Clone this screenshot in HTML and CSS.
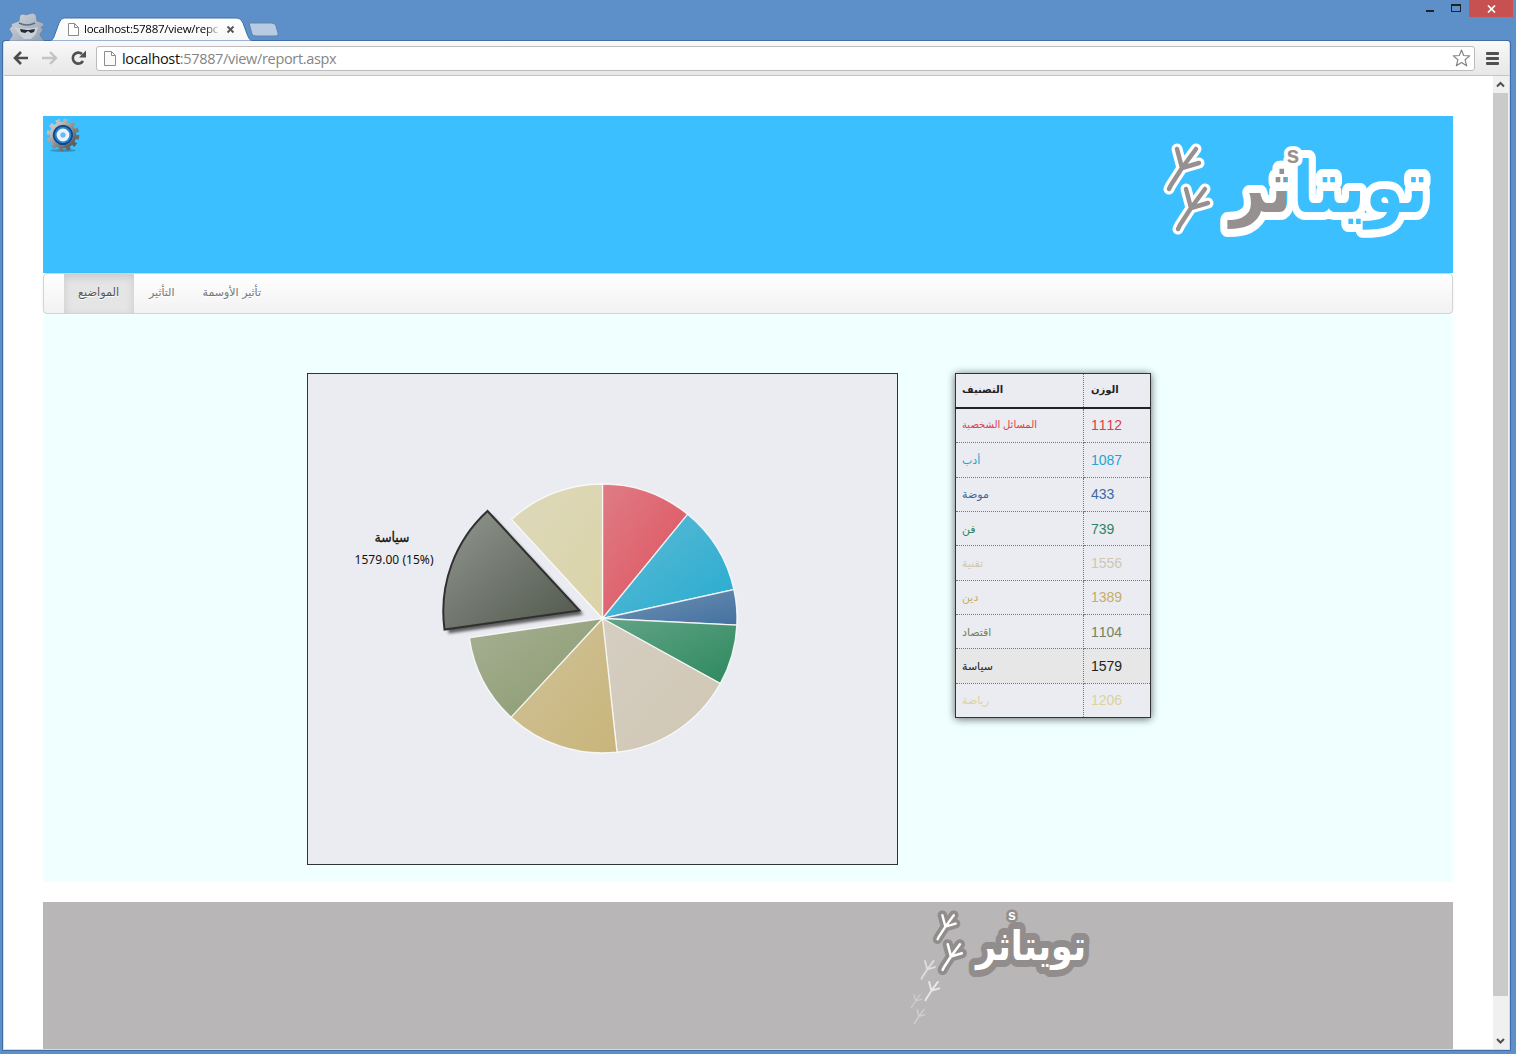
FILE: index.html
```html
<!DOCTYPE html>
<html lang="ar">
<head>
<meta charset="utf-8">
<title>localhost:57887/view/report.aspx</title>
<link rel="stylesheet" href="styles.css">
</head>
<body>
<div class="titlebar">
  <svg class="tabs" width="300" height="41" viewBox="0 0 300 41">
    <defs>
      <linearGradient id="coat" x1="0" y1="0" x2="1" y2="1"><stop offset="0" stop-color="#d3d9e1"/><stop offset="1" stop-color="#929eae"/></linearGradient>
      <linearGradient id="tabfill" x1="0" y1="0" x2="0" y2="1"><stop offset="0" stop-color="#fff"/><stop offset="1" stop-color="#f7f7f7"/></linearGradient>
    </defs>
    <path d="M9 41c1-3 4-5 3-7l-3-5 3-3-1-2 8-3 1-6 3-1 3 1 3-1 4-1 3 2 1 6 6 2 1 3-3 1 2 3-3 4c0 3 3 4 4 7z" fill="url(#coat)" stroke="#6484a9" stroke-width=".7"/>
    <path d="M14 27q12 3 24 0l-2 7-5 5h-7l-6-6z" fill="#c9d0d9"/>
    <path d="M19 23q8 4 16 0" stroke="#5d6c7e" stroke-width="1.400" fill="none"/>
    <path d="M20 29l7 1h2l6-1-1 3-3 1-3-2-3 2-4-1z" fill="#222b36"/>
    <path d="M50 41c3-1 4-4 5-7l4-11q2-5 5-5h173q4 0 6 5l4 11c2 5 3 7 7 7z" fill="url(#tabfill)" stroke="#416fa8"/>
    <path d="M249 23h23q3 0 4 3l2 7q1 3-2 3h-20q-3 0-4-2z" fill="#b7cce3" stroke="#5e83af"/>
    <path d="M68.500 23.500h6l4 4v8h-10zM74.500 23.500v4h4" fill="#fff" stroke="#8b8b8b"/>
    <path d="M227.500 26.500l6 6m0-6l-6 6" stroke="#555" stroke-width="1.800"/>
  </svg>
  <span class="tab-title">localhost:57887/view/repc</span>
  <div class="window-buttons">
    <i class="minimize"></i><i class="maximize"></i>
    <span class="close"><svg width="9" height="8"><path d="M1 .5l7 7m0-7l-7 7" stroke="#fff" stroke-width="1.700"/></svg></span>
  </div>
</div>
<div class="window">
  <div class="toolbar">
    <svg class="tools" width="82" height="34" viewBox="0 0 82 34">
      <path d="M11 17h13M17 11l-6 6 6 6" fill="none" stroke="#4d4d4d" stroke-width="2.600"/>
      <path d="M38 17h13M46 11l6 6-6 6" fill="none" stroke="#c3c3c3" stroke-width="2.400"/>
      <path d="M79 20a5.500 5.500 0 1 1-1-7" fill="none" stroke="#505050" stroke-width="2.600"/>
      <path d="M82 9.500v7h-7z" fill="#505050"/>
    </svg>
    <div class="address">
      <svg width="12" height="16"><path d="M.5 1.500h7l4 4v10h-11zM7.500 1.500v4h4" fill="#fafafa" stroke="#8d8d8d"/></svg>
      <span class="url"><b>localhost</b>:57887/view/report.aspx</span>
      <svg class="star" width="19" height="18" viewBox="0 0 19 18"><path d="M9.500 1l2.200 5.500 6 .4-4.600 3.900 1.600 6-5.200-3.200-5.200 3.200 1.600-6L1.300 6.900l6-.4z" fill="#fff" stroke="#858585" stroke-width="1.200" stroke-linejoin="round"/></svg>
    </div>
    <div class="menu"><i></i><i></i><i></i></div>
  </div>
  <div class="viewport">
    <div class="page">
      <header class="banner">
        <svg class="gear" width="38" height="38" viewBox="-19 -19 38 38">
          <defs><linearGradient id="metal" x1="0" y1="0" x2="1" y2="1"><stop offset="0" stop-color="#d9d9d9"/><stop offset="1" stop-color="#4b4b4b"/></linearGradient></defs>
          <ellipse cy="15.500" rx="13" ry="1.500" fill="#197bad" opacity=".6"/>
          <circle r="14.300" fill="none" stroke="url(#metal)" stroke-width="4" stroke-dasharray="4.200 3.287"/>
          <circle r="11.800" fill="#d9e1e6" stroke="url(#metal)" stroke-width="3"/>
          <circle r="9.300" fill="#2986d6" stroke="#144885" stroke-width="2"/>
          <circle r="4.600" fill="#75b9ec" stroke="#eaf5fc" stroke-width="3.600"/>
        </svg>
        <svg class="logo" width="290" height="120" viewBox="0 0 290 120">
          <defs>
            <g id="foot"><path d="M3 38L14 21 9 2M14 21L28 2M14 21L31 16M3 38L1 42"/></g>
            <linearGradient id="split" gradientUnits="userSpaceOnUse" x1="0" y1="0" x2="290" y2="0"><stop offset=".465" stop-color="#969190"/><stop offset=".465" stop-color="#3cbfff"/></linearGradient>
          </defs>
          <g fill="none" stroke-linecap="round" stroke-linejoin="round">
            <g stroke="#fff" stroke-width="11"><use href="#foot" x="17" y="17"/><use href="#foot" x="26" y="57"/></g>
            <g stroke="#969190" stroke-width="4.500"><use href="#foot" x="17" y="17"/><use href="#foot" x="26" y="57"/></g>
          </g>
          <g transform="translate(0 82) scale(1 1.150)"><text class="word" x="277" y="0" textLength="198" lengthAdjust="spacingAndGlyphs">تويتاثر</text></g>
          <text class="mark" x="142" y="33">s</text>
        </svg>
      </header>
      <nav class="nav"><a class="active">المواضيع</a><a>التأثير</a><a>تأثير الأوسمة</a></nav>
      <main class="content">
        <svg class="chart" width="591" height="492" viewBox="0 0 589 490">
          <defs>
            <linearGradient id="shine" x1="0" y1="0" x2="1" y2="1"><stop offset="0" stop-color="#e0e2e5" stop-opacity=".3"/><stop offset="1" stop-color="#e0e2e5" stop-opacity="0"/></linearGradient>
            <linearGradient id="dark" x1="0" y1="0" x2="1" y2="1"><stop offset="0" stop-color="#92978f"/><stop offset="1" stop-color="#50574c"/></linearGradient>
            <filter id="shade" x="-20%" y="-20%" width="150%" height="150%"><feDropShadow dx="4" dy="4" stdDeviation="1.500" flood-color="#000" flood-opacity=".6"/></filter>
            <path id="s1" d="M0 0V-134.500A134.500 134.500 0 0 1 85.060-104.200z"/>
            <path id="s2" d="M0 0L85.060-104.200A134.500 134.500 0 0 1 131.350-28.950z"/>
            <path id="s3" d="M0 0L131.350-28.950A134.500 134.500 0 0 1 134.330 6.690z"/>
            <path id="s4" d="M0 0L134.330 6.690A134.500 134.500 0 0 1 117.700 65.040z"/>
            <path id="s5" d="M0 0L117.700 65.040A134.500 134.500 0 0 1 14.500 133.700z"/>
            <path id="s6" d="M0 0L14.500 133.700A134.500 134.500 0 0 1-91.400 98.670z"/>
            <path id="s7" d="M0 0L-91.400 98.670A134.500 134.500 0 0 1-133.100 19.300z"/>
            <path id="s8" d="M-23-8L-158 11A136 136 0 0 1-115-107.500z"/>
            <path id="s9" d="M0 0L-90.900-99.100A134.500 134.500 0 0 1 0-134.500z"/>
          </defs>
          <g transform="translate(294.500 244.500)" stroke="#fff" stroke-opacity=".85" stroke-width="1.300">
            <use href="#s1" fill="#de505c"/><use href="#s2" fill="#27abcf"/><use href="#s3" fill="#4371a0"/><use href="#s4" fill="#2d895e"/><use href="#s5" fill="#d0c6b3"/><use href="#s6" fill="#c9b57a"/><use href="#s7" fill="#8b9a6f"/><use href="#s9" fill="#dbd4a8"/>
            <g fill="url(#shine)" stroke="none"><use href="#s1"/><use href="#s2"/><use href="#s3"/><use href="#s4"/><use href="#s5"/><use href="#s6"/><use href="#s7"/><use href="#s9"/></g>
            <use href="#s8" fill="#50574c" stroke="none" filter="url(#shade)"/>
            <use href="#s8" fill="url(#dark)" stroke="#303030" stroke-opacity="1" stroke-width="2"/>
          </g>
          <text class="slice-name" x="84" y="168" textLength="35" lengthAdjust="spacingAndGlyphs">سياسة</text>
          <text class="slice-value" x="86" y="190" textLength="79">1579.00 (15%)</text>
        </svg>
        <table class="weights">
          <thead><tr><th>التصنيف</th><th>الوزن</th></tr></thead>
          <tbody>
            <tr class="personal"><td>المسائل الشخصية</td><td>1112</td></tr>
            <tr class="literature"><td>أدب</td><td>1087</td></tr>
            <tr class="fashion"><td>موضة</td><td>433</td></tr>
            <tr class="art"><td>فن</td><td>739</td></tr>
            <tr class="technology"><td>تقنية</td><td>1556</td></tr>
            <tr class="religion"><td>دين</td><td>1389</td></tr>
            <tr class="economy"><td>اقتصاد</td><td>1104</td></tr>
            <tr class="politics"><td>سياسة</td><td>1579</td></tr>
            <tr class="sport"><td>رياضة</td><td>1206</td></tr>
          </tbody>
        </table>
      </main>
      <footer class="footer">
        <svg class="footer-logo" width="200" height="130" viewBox="0 0 200 130">
          <g fill="none" stroke-linecap="round" stroke-linejoin="round">
            <g stroke="#918d8c"><use href="#foot" transform="translate(34 12) scale(.6)" stroke-width="16"/><use href="#foot" transform="translate(39 41) scale(.64)" stroke-width="16"/></g>
            <g stroke="#fff"><use href="#foot" transform="translate(34 12) scale(.6)" stroke-width="4"/><use href="#foot" transform="translate(39 41) scale(.64)" stroke-width="4"/>
            <use href="#foot" transform="translate(18 58) scale(.45)" stroke-width="4" opacity=".55"/><use href="#foot" transform="translate(22 79) scale(.46)" stroke-width="4" opacity=".7"/><use href="#foot" transform="translate(8 92) scale(.33)" stroke-width="4" opacity=".3"/><use href="#foot" transform="translate(11 107) scale(.35)" stroke-width="4" opacity=".35"/></g>
          </g>
          <g class="small-logo">
            <g transform="translate(0 58) scale(1 1.150)"><text class="word" x="183" y="0" textLength="110" lengthAdjust="spacingAndGlyphs">تويتاثر</text></g>
            <text class="mark" x="109" y="18">s</text>
          </g>
        </svg>
      </footer>
    </div>
    <div class="scrollbar">
      <svg width="15" height="17"><path d="M4 10.500l3.500-3.500 3.500 3.500" fill="none" stroke="#505050" stroke-width="2"/></svg>
      <div class="thumb"></div>
      <svg width="15" height="17"><path d="M4 7l3.500 3.500 3.500-3.500" fill="none" stroke="#505050" stroke-width="2"/></svg>
    </div>
  </div>
</div>
</body>
</html>
```
FILE: styles.css
```css
* { box-sizing: border-box; }
html, body { height: 100%; }
body {
  margin: 0;
  display: flex;
  flex-direction: column;
  overflow: hidden;
  background: #5d8fc8;
  font-family: "Liberation Sans", "DejaVu Sans", sans-serif;
}
svg { display: block; flex: none; }

.titlebar { position: relative; height: 41px; flex: none; display: flex; justify-content: space-between; align-items: flex-start; }
.tab-title {
  position: absolute; left: 84px; top: 20px; width: 137px; height: 17px;
  overflow: hidden; white-space: nowrap;
  font: 500 11.5px/17px "Open Sans", sans-serif; letter-spacing: -.25px; color: #000;
  -webkit-mask-image: linear-gradient(90deg, #000 88%, transparent);
  mask-image: linear-gradient(90deg, #000 88%, transparent);
}
.window-buttons { display: flex; margin-right: 3px; height: 17px; }
.minimize { width: 8px; height: 2px; margin: 10px 17px 0 0; background: #222; }
.maximize { width: 10px; height: 8px; margin: 4px 8px 0 0; border: 1px solid #222; border-top-width: 2px; }
.close { width: 44px; height: 17px; display: grid; place-items: center; background: #c75050; }

.window {
  flex: 1; min-height: 0;
  margin: 0 6px 4px 3px;
  display: flex; flex-direction: column;
  background: #fff;
  border: 1px solid #d3dbe4; border-top: 0;
  border-radius: 3px 3px 0 0;
  box-shadow: 0 0 0 1px #3f6da5;
}
.toolbar {
  height: 35px; flex: none;
  display: flex; align-items: center;
  border-bottom: 1px solid #c5c5c5;
  border-radius: 3px 3px 0 0;
  background: linear-gradient(#f9f9f9, #e7e7e7);
}
.tools { margin-right: 10px; }
.address {
  flex: 1; height: 25px;
  display: flex; align-items: center;
  padding: 0 3px 0 7px;
  background: #fff;
  border: 1px solid #bcbcbc; border-radius: 3px;
}
.url { flex: 1; margin-left: 6px; padding-top: 1px; font: 14.5px/22px "Open Sans", sans-serif; letter-spacing: -.33px; color: #858585; }
.url b { font-weight: 400; color: #111; }
.menu { width: 13px; margin: 0 10px 0 11px; display: grid; gap: 2px; }
.menu i { height: 3px; border-radius: 1px; background: #505050; }

.viewport { flex: 1; min-height: 0; display: flex; overflow: hidden; }
.page { flex: 1; padding: 40px 40px 0 39px; }
.banner { height: 157px; display: flex; justify-content: space-between; background: #3cbfff; }
.gear { margin: 0 1px; }
.logo { margin: 14px 12px 0 0; }
.word, .mark { stroke: #fff; stroke-width: 14px; stroke-linejoin: round; paint-order: stroke; }
.word { font: bold 62px "DejaVu Sans", sans-serif; direction: rtl; fill: url(#split); }
.mark { font: bold 23px "Liberation Sans", sans-serif; text-anchor: middle; fill: #969190; stroke-width: 8px; }

.nav {
  height: 41px; padding-left: 20px;
  display: flex;
  border: 1px solid #d4d4d4; border-radius: 4px;
  background: linear-gradient(#fff, #f2f2f2);
  box-shadow: 0 1px 3px rgba(0, 0, 0, .07);
  font: 11px/38px "DejaVu Sans", sans-serif; color: #777;
}
.nav a { padding: 0 13px 0 15px; text-shadow: 0 1px 0 #fff; }
.nav .active { width: 70px; padding: 0 14px; font-size: 11.3px; color: #555; background: #e5e5e5; box-shadow: inset 0 3px 8px rgba(0, 0, 0, .125); }

.content {
  height: 568px; padding: 59px 0 0 264px;
  display: flex; align-items: flex-start; gap: 57px;
  background: #f0ffff;
}
.chart { background: #ebecf1; border: 1px solid #333; }
.slice-name { font: 14px "DejaVu Sans", sans-serif; text-anchor: middle; fill: #111; stroke: #111; stroke-width: .3px; }
.slice-value { font: 12px "Noto Sans", sans-serif; text-anchor: middle; fill: #111; }

.weights {
  width: 196px; height: 345px;
  border-collapse: collapse; table-layout: fixed;
  border: 1px solid #333;
  background: #ebecf1;
  box-shadow: 0 1px 8px rgba(0, 0, 0, .6);
  font-size: 14px; line-height: 20px; font-kerning: none;
}
.weights th, .weights td { padding: 0 7px; text-align: left; border-bottom: 1px dotted #777; }
.weights th { height: 34px; font-size: 10px; color: #222; border-bottom: 2px solid #222; }
.weights th:first-child { width: 128px; }
.weights td:first-child { font-size: 11px; }
.weights .personal td:first-child { font-size: 10px; }
.weights th:first-child, .weights td:first-child { padding-left: 6px; border-right: 1px dotted #777; }
.personal { color: #de3e4c; }
.literature { color: #26a4cf; }
.fashion { color: #3c69a0; }
.art { color: #2d8460; }
.technology { color: #d0c6b3; }
.religion { color: #c5ad6a; }
.economy { color: #74835c; }
.politics { color: #1c241b; background: #e7e7e7; }
.sport { color: #ddd29a; }

.footer { height: 160px; margin-top: 20px; padding-left: 860px; background: #b9b6b7; }
.small-logo .word, .small-logo .mark { stroke: #918d8c; stroke-width: 12px; fill: #fff; }
.small-logo .word { font-size: 36px; }
.small-logo .mark { font-size: 14px; stroke-width: 5px; }

.scrollbar { width: 16px; display: flex; flex-direction: column; background: #f0f0f0; }
.thumb { height: 903px; margin-right: 1px; margin-bottom: 36px; background: #cacaca; }
```
